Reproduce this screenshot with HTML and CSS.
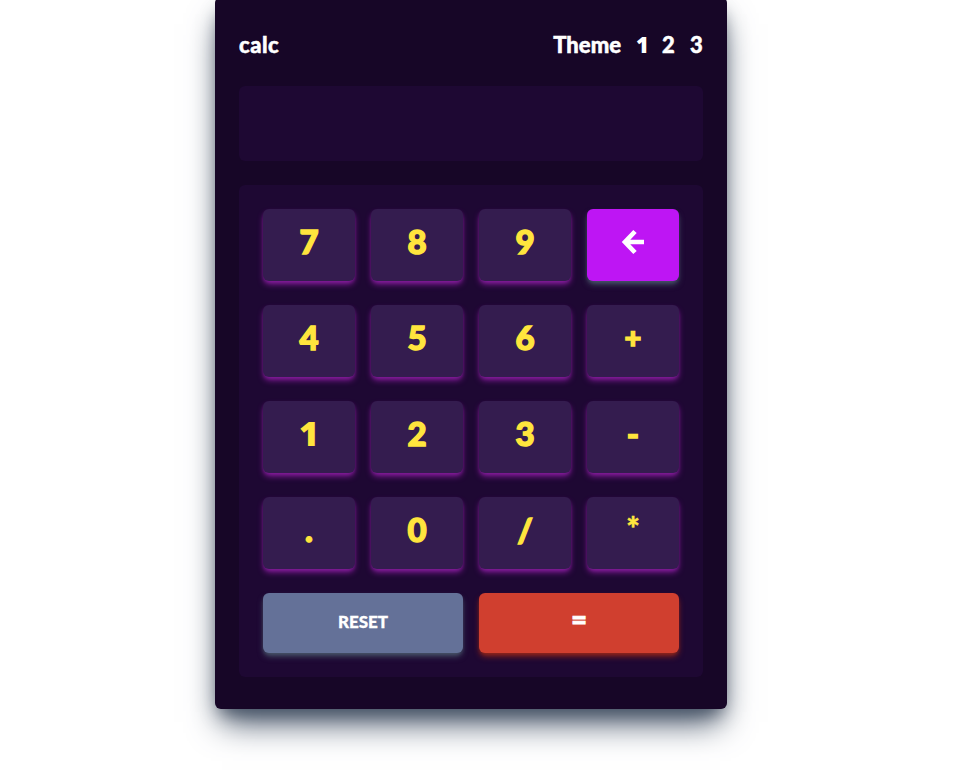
FILE: index.html
```html
<!DOCTYPE html>
<html lang="en"><head><meta charset="utf-8"><title>Calculator</title><link rel="stylesheet" href="styles.css"></head>
<body><main class="calculator">
<header class="header"><span class="brand">calc</span><nav class="themes"><span class="theme-label">Theme</span><span class="one">1</span><span>2</span><span>3</span></nav></header>
<div class="screen"></div>
<section class="keypad">
<button class="key">7</button><button class="key">8</button><button class="key">9</button><button class="key delete" aria-label="Delete"><svg class="arrow" viewBox="0 0 24 26"><path d="M14 2.5 4 13l10 10.5M5 13h18"/></svg></button>
<button class="key">4</button><button class="key">5</button><button class="key">6</button><button class="key"><span class="plus">+</span></button>
<button class="key"><span class="one">1</span></button><button class="key">2</button><button class="key">3</button><button class="key"><span class="minus">-</span></button>
<button class="key">.</button><button class="key">0</button><button class="key"><span class="slash">/</span></button><button class="key"><span class="star">*</span></button>
<button class="key wide reset"><span class="reset-text">RESET</span></button><button class="key wide equals"><span class="equal">=</span></button>
</section></main></body></html>
```

FILE: styles.css
```css
* { box-sizing: border-box; }
body { display: flow-root; min-height: 776px; margin: 0; background: #fff; font-family: Lato, sans-serif; font-weight: 900; }
.calculator { width: 512px; height: 712px; margin-top: -3px; margin-left: 215px; padding: 36px 24px 32px; background: #170627; border-radius: 6px; box-shadow: 0 20px 32px -7px #475569, 0 10px 18px -7px #374151; }
.header { height: 24px; display: flex; justify-content: space-between; align-items: center; color: #fff; font-size: 22px; line-height: 24px; -webkit-text-stroke: .5px #fff; }
.brand { letter-spacing: .5px; }
.themes { display: flex; gap: 15px; margin-right: 1px; }
.themes span + span { width: 12px; text-align: center; }
.themes .one { width: 10px; margin-right: 0; font-size: 22px; line-height: 22px; }
.themes .one + span { margin-right: 1px; }
.one { font-family: "Open Sans", sans-serif; font-weight: 800; -webkit-text-stroke: 0; }
.themes span.one { width: 11px; }
.screen { height: 75px; margin-top: 29px; background: #1e0833; border-radius: 6px; }
.keypad { height: 492px; margin-top: 24px; padding: 24px; background: #1e0833; border-radius: 6px; display: grid; grid-template-columns: repeat(4, 1fr); grid-template-rows: repeat(4, 72px) 60px; gap: 24px 16px; }
.key { display: flex; align-items: center; justify-content: center; padding: 0 0 8px; border: 0; border-radius: 6px; background: #341c4f; color: #ffe53d; font: 900 33px Lato, sans-serif; -webkit-text-stroke: 1.4px currentColor; box-shadow: 0 4px 6px -1px #881c9e, 0 2px 4px -2px #881c9e; }
.key .one { font-size: 34px; line-height: 40px; }
.delete { padding-bottom: 6px; background: #be15f4; box-shadow: 0 4px 6px -1px #475569, 0 2px 4px -2px #475569; }
.arrow { width: 24px; height: 26px; fill: none; stroke: #fff; stroke-width: 4.7; }
.wide { grid-column: span 2; color: #fff; }
.reset { padding-bottom: 3px; background: #647198; box-shadow: 0 4px 6px -1px #475569, 0 2px 4px -2px #475569; }
.reset-text { font-size: 17px; -webkit-text-stroke: .3px #fff; }
.equals { padding-bottom: 9px; background: #d03f2f; box-shadow: 0 4px 6px -1px #93261a, 0 2px 4px -2px #93261a; }
.equal { font-size: 27px; -webkit-text-stroke: 1px #fff; }
.plus { font-size: 29px; padding-bottom: 2px; }
.star { font-size: 32px; padding-bottom: 3px; -webkit-text-stroke: .5px currentColor; }
```
